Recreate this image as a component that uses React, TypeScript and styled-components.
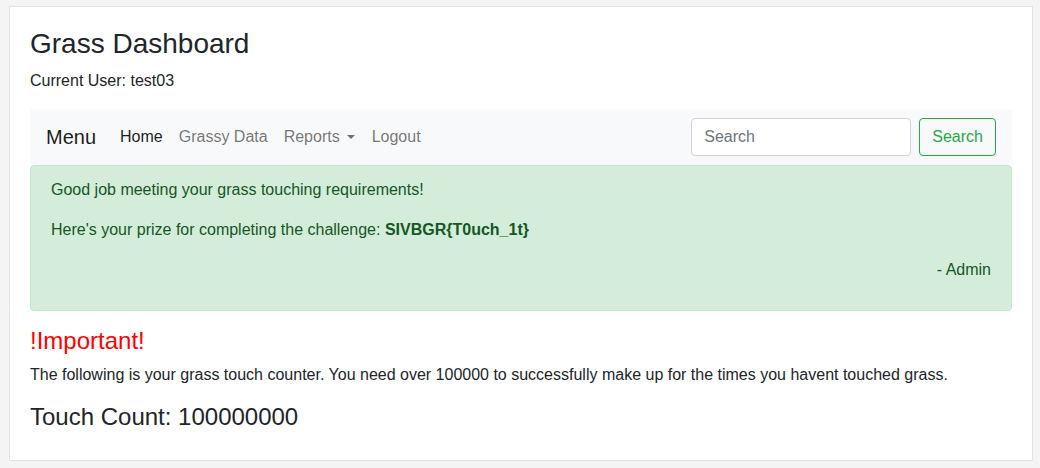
import React from "react";
import styled, { createGlobalStyle } from "styled-components";

const GlobalStyle = createGlobalStyle`
  html, body { margin: 0; padding: 0; }
  body {
    background: #f4f4f4;
    font-family: "Liberation Sans", Arial, sans-serif;
    font-size: 16px;
    line-height: 1.5;
    color: #212529;
  }
  * { box-sizing: border-box; }
`;

const Page = styled.div`
  padding: 6px 7px 7px 9px;
`;

const Card = styled.div`
  width: 1024px;
  background: #fff;
  border: 1px solid #e3e3e3;
  padding: 20px;
`;

const Title = styled.h3`
  margin: 0 0 8px;
  font-size: 28px;
  font-weight: 500;
  line-height: 1.2;
`;

const Para = styled.p<{ $align?: string }>`
  margin: 0 0 16px;
  text-align: ${(p) => p.$align || "left"};
`;

const Navbar = styled.nav`
  display: flex;
  align-items: center;
  background: #f8f9fa;
  padding: 8px 16px;
`;

const Brand = styled.a`
  font-size: 20px;
  line-height: 30px;
  padding: 5px 0;
  margin-right: 16px;
  color: rgba(0, 0, 0, 0.9);
  text-decoration: none;
`;

const NavList = styled.ul`
  display: flex;
  list-style: none;
  margin: 0;
  padding: 0;
  flex: 1;
`;

const NavLink = styled.a<{ $active?: boolean }>`
  display: flex;
  align-items: center;
  padding: 8px;
  color: ${(p) => (p.$active ? "rgba(0,0,0,0.9)" : "rgba(0,0,0,0.55)")};
  text-decoration: none;
`;

const Caret = styled.span`
  display: inline-block;
  margin-left: 7px;
  margin-right: 1px;
  border-top: 4px solid;
  border-right: 4px solid transparent;
  border-left: 4px solid transparent;
  margin-top: 1px;
`;

const SearchForm = styled.form`
  display: flex;
  align-items: center;
`;

const Input = styled.input`
  width: 220px;
  height: 38px;
  padding: 6px 12px;
  font-family: inherit;
  font-size: 16px;
  color: #495057;
  border: 1px solid #ced4da;
  border-radius: 4px;
  margin-right: 8px;
  background: #fff;
  &::placeholder { color: #6c757d; }
`;

const Button = styled.button`
  height: 38px;
  padding: 6px 12px;
  font-family: inherit;
  font-size: 16px;
  color: #28a745;
  background: transparent;
  border: 1px solid #28a745;
  border-radius: 4px;
`;

const Alert = styled.div`
  background: #d4edda;
  border: 1px solid #c3e6cb;
  color: #155724;
  border-radius: 4px;
  padding: 12px 20px;
  margin-bottom: 16px;
`;

const Heading = styled.h4<{ $color?: string }>`
  margin: 0 0 8px;
  font-size: 24px;
  font-weight: 500;
  line-height: 1.2;
  color: ${(p) => p.$color || "#212529"};
`;

export default function App() {
  return (
    <>
      <GlobalStyle />
      <Page>
        <Card>
          <Title>Grass Dashboard</Title>
          <Para>Current User: test03</Para>
          <Navbar>
            <Brand href="#">Menu</Brand>
            <NavList>
              <li><NavLink $active href="#">Home</NavLink></li>
              <li><NavLink href="#">Grassy Data</NavLink></li>
              <li><NavLink href="#">Reports<Caret /></NavLink></li>
              <li><NavLink href="#">Logout</NavLink></li>
            </NavList>
            <SearchForm onSubmit={(e) => e.preventDefault()}>
              <Input type="search" placeholder="Search" />
              <Button type="submit">Search</Button>
            </SearchForm>
          </Navbar>
          <Alert>
            <Para>Good job meeting your grass touching requirements!</Para>
            <Para>
              Here's your prize for completing the challenge: <b>SIVBGR&#123;T0uch_1t&#125;</b>
            </Para>
            <Para $align="right">- Admin</Para>
          </Alert>
          <Heading $color="#ff0000">!Important!</Heading>
          <Para>
            The following is your grass touch counter. You need over 100000 to successfully make up for the times you havent touched grass.
          </Para>
          <Heading>Touch Count: 100000000</Heading>
        </Card>
      </Page>
    </>
  );
}
